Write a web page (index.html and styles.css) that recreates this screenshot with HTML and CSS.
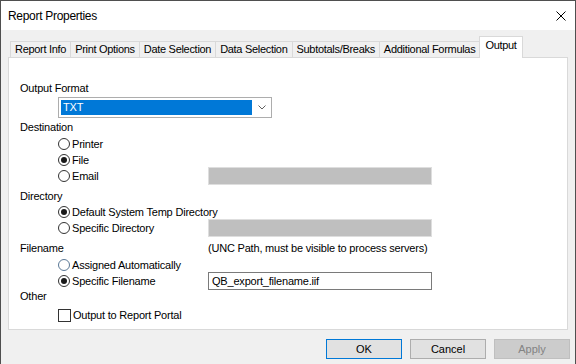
FILE: index.html
```html
<!DOCTYPE html>
<html>
<head>
    <title>Report Properties</title>
    <meta charset="UTF-8">
    <link rel="stylesheet" href="styles.css">
</head>
<body>
    <div class="window">
        <div class="titlebar">
            <span class="title">Report Properties</span>
            <button class="close-button" title="Close">
                <svg viewBox="0 0 10 10">
                    <path d="M0.5 0.5L9.5 9.5M9.5 0.5L0.5 9.5"/>
                </svg>
            </button>
        </div>
        <div class="dialog-body">
            <div class="tabs">
                <div class="tab">Report Info</div>
                <div class="tab">Print Options</div>
                <div class="tab">Date Selection</div>
                <div class="tab">Data Selection</div>
                <div class="tab">Subtotals/Breaks</div>
                <div class="tab">Additional Formulas</div>
                <div class="tab active">Output</div>
            </div>
            <div class="tab-panel">
                <div class="group-label first">Output Format</div>
                <div class="select">
                    <span class="select-value">TXT</span>
                    <svg class="select-arrow" viewBox="0 0 8 5">
                        <path d="M0.5 0.5L4 4L7.5 0.5"/>
                    </svg>
                </div>

                <div class="group-label after-select">Destination</div>
                <div class="options">
                    <div class="option-row">
                        <label class="option"><span class="radio"></span>Printer</label>
                    </div>
                    <div class="option-row">
                        <label class="option"><span class="radio checked"></span>File</label>
                    </div>
                    <div class="option-row">
                        <label class="option"><span class="radio"></span>Email</label>
                        <div class="field disabled"></div>
                    </div>
                </div>

                <div class="group-label">Directory</div>
                <div class="options tight">
                    <div class="option-row">
                        <label class="option"><span class="radio checked"></span>Default System Temp Directory</label>
                    </div>
                    <div class="option-row">
                        <label class="option"><span class="radio"></span>Specific Directory</label>
                        <div class="field disabled"></div>
                    </div>
                </div>

                <div class="group-label label-row">
                    <span class="label-text">Filename</span>
                    <span class="note">(UNC Path, must be visible to process servers)</span>
                </div>
                <div class="options">
                    <div class="option-row">
                        <label class="option"><span class="radio hover"></span>Assigned Automatically</label>
                    </div>
                    <div class="option-row">
                        <label class="option"><span class="radio checked"></span>Specific Filename</label>
                        <div class="field">QB_export_filename.iif</div>
                    </div>
                </div>

                <div class="group-label compact">Other</div>
                <div class="options spaced">
                    <div class="option-row">
                        <label class="option"><span class="checkbox"></span>Output to Report Portal</label>
                    </div>
                </div>
            </div>
            <div class="button-row">
                <button class="btn default">OK</button>
                <button class="btn">Cancel</button>
                <button class="btn" disabled>Apply</button>
            </div>
        </div>
    </div>
</body>
</html>
```

FILE: styles.css
```css
* {
    box-sizing: border-box;
}
body {
    margin: 0;
    font-family: "Liberation Sans", Arial, sans-serif;
    font-size: 11px;
    letter-spacing: -0.2px;
    color: #000;
    background: #f0f0f0;
}
.window {
    width: 576px;
    height: 364px;
    border: 1px solid #4f4f4f;
    border-bottom: none;
    background: #f0f0f0;
    display: flex;
    flex-direction: column;
    overflow: hidden;
}
.titlebar {
    height: 29px;
    background: #fff;
    display: flex;
    align-items: center;
    justify-content: space-between;
    padding: 0 9px 0 7px;
}
.title {
    font-size: 12px;
    letter-spacing: -0.3px;
}
.close-button {
    width: 10px;
    height: 10px;
    padding: 0;
    border: none;
    background: none;
    display: flex;
}
.close-button svg {
    width: 10px;
    height: 10px;
    stroke: #000;
    stroke-width: 1;
    fill: none;
}
.dialog-body {
    flex-grow: 1;
    padding: 0 7px;
    display: flex;
    flex-direction: column;
}
.tabs {
    display: flex;
    align-items: flex-end;
    height: 27px;
    padding-left: 2px;
    position: relative;
    z-index: 1;
    letter-spacing: -0.3px;
}
.tab {
    height: 16px;
    line-height: 15px;
    padding: 0 4px;
    border: 1px solid #d9d9d9;
    border-bottom: none;
    margin-left: -1px;
    background: #f0f0f0;
    white-space: nowrap;
}
.tab:first-child {
    margin-left: 0;
}
.tab.active {
    height: 22px;
    line-height: 17px;
    background: #fff;
    margin-bottom: -1px;
    padding: 0 5px;
}
.tab-panel {
    height: 273px;
    background: #fff;
    border: 1px solid #d9d9d9;
    padding: 23px 0 0 11px;
}
.group-label {
    height: 14px;
    line-height: 14px;
    margin-top: 5px;
}
.group-label.first {
    margin-top: 0;
}
.group-label.after-select {
    margin-top: 2px;
}
.group-label.compact {
    margin-top: 0;
}
.label-row {
    display: flex;
}
.label-text {
    width: 188px;
}
.select {
    width: 214px;
    height: 21px;
    margin: 2px 0 0 38px;
    border: 1px solid #adadad;
    background: #fff;
    display: flex;
    align-items: center;
    padding: 2px;
}
.select-value {
    width: 191px;
    height: 15px;
    line-height: 15px;
    background: #0078d7;
    color: #fff;
    padding-left: 2px;
}
.select-arrow {
    width: 8px;
    height: 5px;
    margin-left: 6px;
    stroke: #606060;
    stroke-width: 1;
    fill: none;
}
.options {
    margin: 2px 0 0 38px;
}
.options.tight {
    margin-top: 1px;
}
.options.spaced {
    margin-top: 4px;
}
.option-row {
    height: 16px;
    display: flex;
    align-items: center;
}
.option {
    width: 150px;
    display: flex;
    align-items: center;
    white-space: nowrap;
}
.radio {
    width: 12px;
    height: 12px;
    border: 1px solid #333;
    border-radius: 50%;
    background: #fff;
    margin-right: 2px;
    display: flex;
    align-items: center;
    justify-content: center;
    flex-shrink: 0;
}
.radio.hover {
    border-color: #5a7896;
}
.radio.checked::after {
    content: "";
    width: 6px;
    height: 6px;
    border-radius: 50%;
    background: #1a1a1a;
}
.checkbox {
    width: 13px;
    height: 13px;
    border: 1px solid #333;
    background: #fff;
    margin-right: 2px;
    flex-shrink: 0;
}
.field {
    width: 224px;
    height: 18px;
    line-height: 16px;
    border: 1px solid #7a7a7a;
    background: #fff;
    padding-left: 3px;
    white-space: nowrap;
}
.field.disabled {
    border-color: #dedede;
    background: #bfbfbf;
}
.button-row {
    display: flex;
    justify-content: flex-end;
    gap: 8px;
    margin: 9px -2px 0 0;
}
.btn {
    width: 76px;
    height: 20px;
    padding: 0;
    font-family: "Liberation Sans", Arial, sans-serif;
    font-size: 11px;
    color: #000;
    background: #e1e1e1;
    border: 1px solid #adadad;
}
.btn.default {
    border-color: #0078d7;
}
.btn:disabled {
    background: #cccccc;
    border-color: #bfbfbf;
    color: #838383;
}
```
